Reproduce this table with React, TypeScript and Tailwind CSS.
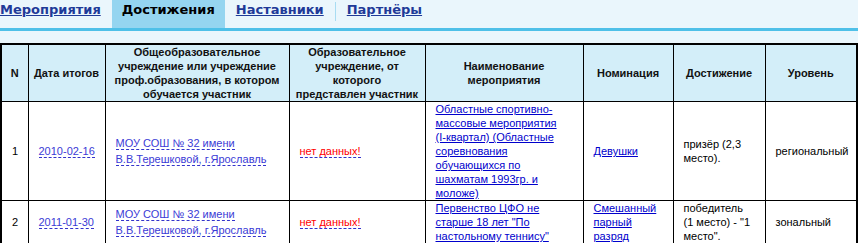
import React from 'react';

type Row = {
  n: number;
  date: string;
  school: string[];
  event: string;
  nomination: string;
  result: string;
  level: string;
};

const rows: Row[] = [
  {
    n: 1,
    date: '2010-02-16',
    school: ['МОУ СОШ № 32 имени', 'В.В.Терешковой, г.Ярославль'],
    event:
      'Областные спортивно-массовые мероприятия (I-квартал) (Областные соревнования обучающихся по шахматам 1993гр. и моложе)',
    nomination: 'Девушки',
    result: 'призёр (2,3 место).',
    level: 'региональный',
  },
  {
    n: 2,
    date: '2011-01-30',
    school: ['МОУ СОШ № 32 имени', 'В.В.Терешковой, г.Ярославль'],
    event: 'Первенство ЦФО не старше 18 лет "По настольному теннису"',
    nomination: 'Смешанный парный разряд',
    result: 'победитель (1 место) - "1 место".',
    level: 'зональный',
  },
];

// header lines kept as in the original page
const headers: string[][] = [
  ['N'],
  ['Дата итогов'],
  ['Общеобразовательное', 'учреждение или учреждение', 'проф.образования, в котором', 'обучается участник'],
  ['Образовательное', 'учреждение, от', 'которого', 'представлен участник'],
  ['Наименование', 'мероприятия'],
  ['Номинация'],
  ['Достижение'],
  ['Уровень'],
];

const colWidths = ['w-[27px]', 'w-[77px]', 'w-[184px]', 'w-[136px]', 'w-[158px]', 'w-[90px]', 'w-[92px]', 'w-[92px]'];

export default function App() {
  return (
    <div className="w-[858px] h-[243px] overflow-hidden bg-[#eaf6fc] font-[family-name:'Liberation_Sans',Arial,sans-serif]">
      {/* tabs */}
      <div className="flex h-[28px] items-start font-[family-name:'DejaVu_Sans',Verdana,sans-serif] text-[13px] font-bold">
        <a href="#" className="h-full pr-[11px] pt-[1px] leading-[18px] text-[#1f3a98] underline">
          Мероприятия
        </a>
        <span className="h-full bg-[#95d5f0] px-[10px] pt-[1px] leading-[18px] text-black">Достижения</span>
        <a href="#" className="h-full px-[11px] pt-[1px] leading-[18px] text-[#1f3a98] underline">
          Наставники
        </a>
        <span className="mt-[2px] h-[19px] w-px bg-[#a8dcf2]" />
        <a href="#" className="h-full px-[11px] pt-[1px] leading-[18px] text-[#1f3a98] underline">
          Партнёры
        </a>
      </div>
      <div className="h-[3px] bg-[#4fc0e8]" />
      <div className="h-[12px]" />

      <table className="w-[856px] table-fixed border-collapse border-2 border-black text-[11px] leading-[14px]">
        <colgroup>
          {colWidths.map((w, i) => (
            <col key={i} className={w} />
          ))}
        </colgroup>
        <thead>
          <tr className="bg-[#d3eef9]">
            {headers.map((h, i) => (
              <th key={i} className="border border-black px-[2px] py-0 text-center align-middle font-bold text-[#111]">
                {h.map((line, j) => (
                  <div key={j} className="whitespace-nowrap">
                    {line}
                  </div>
                ))}
              </th>
            ))}
          </tr>
        </thead>
        <tbody className="bg-white text-black">
          {rows.map((r) => (
            <tr key={r.n}>
              <td className="border border-black px-[10px] py-0 align-middle">{r.n}</td>
              <td className="border border-black px-[10px] py-0 align-middle">
                <span className="whitespace-nowrap border-b border-dashed border-[#3333cc] text-[#3b3bd6]">{r.date}</span>
              </td>
              <td className="border border-black px-[10px] py-0 align-middle">
                {r.school.map((s, i) => (
                  <div key={i} className="leading-[16px]">
                    <span className="whitespace-nowrap border-b border-dashed border-[#3333cc] text-[#3b3bd6]">{s}</span>
                  </div>
                ))}
              </td>
              <td className="border border-black px-[10px] py-0 align-middle">
                <span className="whitespace-nowrap border-b border-dashed border-[#3333cc] text-[#ff0000]">нет данных!</span>
              </td>
              <td className="border border-black pl-[10px] pr-[17px] py-0 align-middle">
                <a href="#" className="text-[#0000cc] underline">
                  {r.event}
                </a>
              </td>
              <td className="border border-black px-[10px] py-0 align-middle">
                <a href="#" className="text-[#0000cc] underline">
                  {r.nomination}
                </a>
              </td>
              <td className="border border-black px-[10px] py-0 align-middle">{r.result}</td>
              <td className="border border-black px-[10px] py-0 align-middle">{r.level}</td>
            </tr>
          ))}
        </tbody>
      </table>
    </div>
  );
}
